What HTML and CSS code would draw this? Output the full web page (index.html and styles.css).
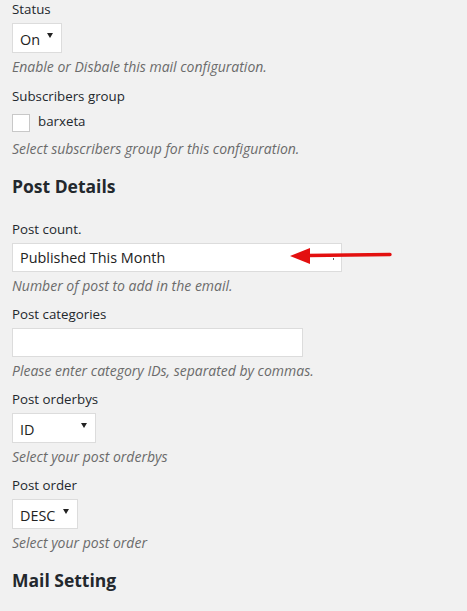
FILE: index.html
```html
<!DOCTYPE html>
<html>
<head>
<meta charset="utf-8">
<link rel="stylesheet" href="styles.css">
</head>
<body>
<div class="page">
  <div class="field first">
    <div class="label">Status</div>
    <div class="select w-on"><span class="val">On</span><span class="caret"></span></div>
    <div class="desc">Enable or Disbale this mail configuration.</div>
  </div>
  <div class="field second">
    <div class="label">Subscribers group</div>
    <label class="check-row"><span class="checkbox"></span><span class="check-text">barxeta</span></label>
    <div class="desc desc-check">Select subscribers group for this configuration.</div>
  </div>

  <h2 class="heading h-post">Post Details</h2>

  <div class="field">
    <div class="label">Post count.</div>
    <div class="input-wrap">
      <div class="input w-count">Published This Month<span class="tick"></span></div>
      <svg class="annot" width="110" height="22" viewBox="0 0 110 22">
        <polygon points="0,10 20,2 20,18" fill="#e3100f"/>
        <path d="M18 9.5 L100 8.5" stroke="#e3100f" stroke-width="3.4" stroke-linecap="round" fill="none"/>
      </svg>
    </div>
    <div class="desc">Number of post to add in the email.</div>
  </div>
  <div class="field">
    <div class="label">Post categories</div>
    <div class="input w-cat"></div>
    <div class="desc">Please enter category IDs, separated by commas.</div>
  </div>
  <div class="field">
    <div class="label">Post orderbys</div>
    <div class="select w-id"><span class="val">ID</span><span class="caret"></span></div>
    <div class="desc">Select your post orderbys</div>
  </div>
  <div class="field">
    <div class="label">Post order</div>
    <div class="select w-desc"><span class="val">DESC</span><span class="caret"></span></div>
    <div class="desc">Select your post order</div>
  </div>

  <h2 class="heading h-mail">Mail Setting</h2>
</div>
</body>
</html>
```

FILE: styles.css
```css
html, body {
  margin: 0;
  padding: 0;
  background: #f1f1f1;
}
body {
  font-family: "Open Sans", "Noto Sans", sans-serif;
  color: #23282d;
  font-size: 14px;
}
.page {
  padding: 0 12px;
  display: flex;
  flex-direction: column;
}
.field {
  display: flex;
  flex-direction: column;
  align-items: flex-start;
  margin-top: 8px;
}
.field.first {
  margin-top: -1px;
}
.field.second {
  margin-top: 9px;
}
.label {
  line-height: 20px;
  height: 20px;
  margin-bottom: 4px;
  font-size: 13.3px;
}
.desc {
  font-style: italic;
  color: #6b6b6b;
  font-size: 14px;
  line-height: 20px;
  margin-top: 4px;
}
.desc-check {
  margin-top: 7px;
}
.select {
  box-sizing: border-box;
  height: 30px;
  background: #fff;
  border: 1px solid #dcdcdc;
  display: flex;
  align-items: center;
  justify-content: space-between;
  padding: 0 8px 0 7px;
  font-size: 14.4px;
  color: #222;
}
.select .val {
  margin-top: 2px;
}
.caret {
  width: 0;
  height: 0;
  border-left: 3px solid transparent;
  border-right: 3px solid transparent;
  border-top: 5px solid #222;
  align-self: flex-start;
  margin-top: 9px;
}
.w-on { width: 50px; }
.w-id { width: 84px; }
.w-desc { width: 66px; }
.input {
  box-sizing: border-box;
  height: 29px;
  background: #fff;
  border: 1px solid #dcdcdc;
  padding: 0 7px;
  display: flex;
  align-items: center;
  font-size: 14.4px;
  color: #222;
  position: relative;
}
.w-count { width: 330px; }
.w-cat { width: 291px; }
.input-wrap {
  position: relative;
}
.tick {
  position: absolute;
  left: 320px;
  top: 14px;
  width: 1px;
  height: 2px;
  background: #666;
}
.annot {
  position: absolute;
  left: 278px;
  top: 3px;
}
.check-row {
  display: flex;
  align-items: center;
  height: 18px;
  margin-top: 4px;
}
.checkbox {
  box-sizing: border-box;
  width: 18px;
  height: 18px;
  border: 1px solid #c8c8c8;
  background: #fff;
  margin-right: 8px;
}
.check-text {
  font-size: 13.3px;
  margin-top: -4px;
}
.heading {
  font-size: 17.5px;
  font-weight: 700;
  margin: 0;
  line-height: 24px;
  color: #23282d;
}
.h-post {
  margin-top: 15px;
  margin-bottom: 13px;
}
.h-mail {
  margin-top: 15px;
}
```
